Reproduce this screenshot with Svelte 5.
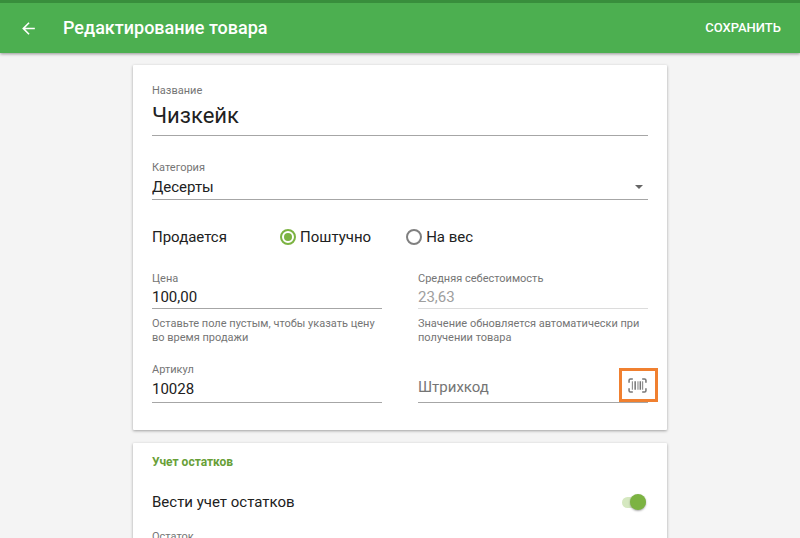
<script lang="ts">
  type SoldBy = "each" | "weight";

  let name = $state("Чизкейк");
  let category = $state("Десерты");
  let soldBy = $state<SoldBy>("each");
  let price = $state("100,00");
  let cost = $state("23,63");
  let sku = $state("10028");
  let barcode = $state("");
  let trackStock = $state(true);
  let stock = $state("0");

  const categories = ["Десерты", "Напитки", "Выпечка"];
</script>

<svelte:head>
  <title>Редактирование товара</title>
</svelte:head>

<div class="page">
  <header>
    <button class="back" aria-label="Назад">
      <svg viewBox="0 0 24 24" width="19" height="19">
        <path d="M20 11H7.83l5.59-5.59L12 4l-8 8 8 8 1.41-1.41L7.83 13H20v-2z" fill="currentColor" />
      </svg>
    </button>
    <h1>Редактирование товара</h1>
    <button class="save">СОХРАНИТЬ</button>
  </header>

  <main>
    <section class="card">
      <div class="field name">
        <label for="name">Название</label>
        <input id="name" type="text" bind:value={name} />
      </div>

      <div class="field category">
        <label for="category">Категория</label>
        <div class="select">
          <select id="category" bind:value={category}>
            {#each categories as item}
              <option value={item}>{item}</option>
            {/each}
          </select>
          <svg viewBox="0 0 8 4" width="8" height="4"><path d="M0 0h8L4 4z" fill="#666" /></svg>
        </div>
      </div>

      <div class="sold" role="radiogroup" aria-labelledby="sold-by">
        <span id="sold-by" class="caption">Продается</span>
        <label><input type="radio" name="sold" value="each" bind:group={soldBy} />Поштучно</label>
        <label><input type="radio" name="sold" value="weight" bind:group={soldBy} />На вес</label>
      </div>

      <div class="columns">
        <div class="field">
          <label for="price">Цена</label>
          <input id="price" type="text" bind:value={price} />
          <p>Оставьте поле пустым, чтобы указать цену во время продажи</p>
        </div>
        <div class="field">
          <label for="cost">Средняя себестоимость</label>
          <input id="cost" type="text" bind:value={cost} disabled />
          <p>Значение обновляется автоматически при получении товара</p>
        </div>
        <div class="field tall">
          <label for="sku">Артикул</label>
          <input id="sku" type="text" bind:value={sku} />
        </div>
        <div class="field tall barcode">
          <input type="text" placeholder="Штрихкод" aria-label="Штрихкод" bind:value={barcode} />
          <button class="scan" aria-label="Сканировать штрихкод">
            <svg viewBox="0 0 20 16" width="19" height="15" fill="none" stroke="#757575">
              <path d="M5 1H2.5Q1 1 1 2.5V5M15 1h2.5Q19 1 19 2.5V5M5 15H2.5Q1 15 1 13.5V11M15 15h2.5Q19 15 19 13.5V11" stroke-width="1.6" />
              <path d="M4.5 3.5v9M10.5 3.5v9M15.5 3.5v9" />
              <path d="M7.5 3.5v9M13 3.5v9" stroke-width="1.6" />
            </svg>
          </button>
        </div>
      </div>
    </section>

    <section class="card stock">
      <h2>Учет остатков</h2>
      <label class="toggle">
        Вести учет остатков
        <input type="checkbox" role="switch" bind:checked={trackStock} />
      </label>
      {#if trackStock}
        <div class="field">
          <label for="stock">Остаток</label>
          <input id="stock" type="text" bind:value={stock} />
        </div>
      {/if}
    </section>
  </main>
</div>

<style>
  :global(body) {
    margin: 0;
    background: #f4f4f4;
  }

  .page {
    height: 100vh;
    display: flex;
    flex-direction: column;
    font: 15px/20px Roboto, sans-serif;
    color: #212121;
  }

  .page * {
    box-sizing: border-box;
  }

  button,
  input,
  select {
    margin: 0;
    padding: 0;
    border: 0;
    border-radius: 0;
    background: none;
    color: inherit;
    font: inherit;
    appearance: none;
  }

  svg {
    display: block;
  }

  header {
    flex: none;
    display: flex;
    align-items: center;
    height: 53px;
    padding: 0 19px;
    border-top: 3px solid #388e3c;
    background: #4caf50;
    color: #fff;
    box-shadow: 0 1px 3px rgba(0, 0, 0, 0.4);
    z-index: 1;
  }

  h1 {
    flex: 1;
    margin: 0 0 0 25px;
    font-size: 18px;
    font-weight: 500;
  }

  .save {
    font-size: 13px;
    font-weight: 500;
  }

  main {
    flex: 1;
    overflow-y: auto;
    scrollbar-width: none;
    padding: 12px 16px;
  }

  .card {
    max-width: 534px;
    margin: 0 auto 13px;
    padding: 19px 19px 27px;
    border-radius: 1px;
    background: #fff;
    box-shadow: 0 1px 3px rgba(0, 0, 0, 0.35);
  }

  .field {
    display: flex;
    flex-direction: column;
  }

  .field label {
    font-size: 11px;
    line-height: 14px;
    color: #757575;
  }

  .field input,
  .select {
    width: 100%;
    height: 23px;
    border-bottom: 1px solid #a6a6a6;
    outline: none;
  }

  .field input:disabled {
    color: #9e9e9e;
    border-color: #dcdcdc;
  }

  .field p {
    margin: 8px 0 0;
    font-size: 11px;
    line-height: 14px;
    color: #757575;
  }

  .name input {
    height: 38px;
    padding-bottom: 2px;
    font-size: 22px;
  }

  .category {
    margin-top: 25px;
  }

  .select {
    display: flex;
    align-items: center;
    height: 25px;
    padding-right: 5px;
  }

  .select select {
    flex: 1;
    outline: none;
  }

  .sold {
    display: flex;
    align-items: center;
    height: 24px;
    margin: 25px 0 23px;
  }

  .sold .caption {
    width: 128px;
  }

  .sold label {
    display: flex;
    align-items: center;
    gap: 4px;
    margin-right: 35px;
  }

  .sold input {
    display: grid;
    place-items: center;
    width: 16px;
    height: 16px;
    border: 2px solid #808080;
    border-radius: 50%;
  }

  .sold input:checked {
    border-color: #7cb342;
  }

  .sold input:checked::before {
    content: "";
    width: 8px;
    height: 8px;
    border-radius: 50%;
    background: #7cb342;
  }

  .columns {
    display: grid;
    grid-template-columns: 1fr 1fr;
    gap: 18px 36px;
  }

  .tall input {
    height: 26px;
    padding-bottom: 2px;
  }

  .barcode {
    position: relative;
    justify-content: flex-end;
  }

  .barcode input {
    padding-bottom: 5px;
  }

  .barcode input::placeholder {
    color: #757575;
    opacity: 1;
  }

  /* hangs over the right end of the barcode line */
  .scan {
    position: absolute;
    right: -10px;
    bottom: 1px;
    display: grid;
    place-items: center;
    width: 39px;
    height: 34px;
    padding-right: 2px;
    border: 3px solid #f08030;
    background: #fff;
  }

  .stock {
    padding-top: 9px;
  }

  h2 {
    margin: 0;
    font-size: 12px;
    font-weight: 700;
    line-height: 20px;
    color: #689f38;
  }

  .toggle {
    display: flex;
    align-items: center;
    justify-content: space-between;
    margin: 20px 0 18px;
  }

  .toggle input {
    display: flex;
    align-items: center;
    width: 24px;
    height: 11px;
    margin-right: 2px;
    border-radius: 6px;
    background: #cfcfcf;
  }

  .toggle input::before {
    content: "";
    width: 16px;
    height: 16px;
    border-radius: 50%;
    background: #fafafa;
    box-shadow: 0 1px 2px rgba(0, 0, 0, 0.35);
  }

  .toggle input:checked {
    justify-content: flex-end;
    background: #d5e8c0;
  }

  .toggle input:checked::before {
    background: #7cb342;
  }
</style>
